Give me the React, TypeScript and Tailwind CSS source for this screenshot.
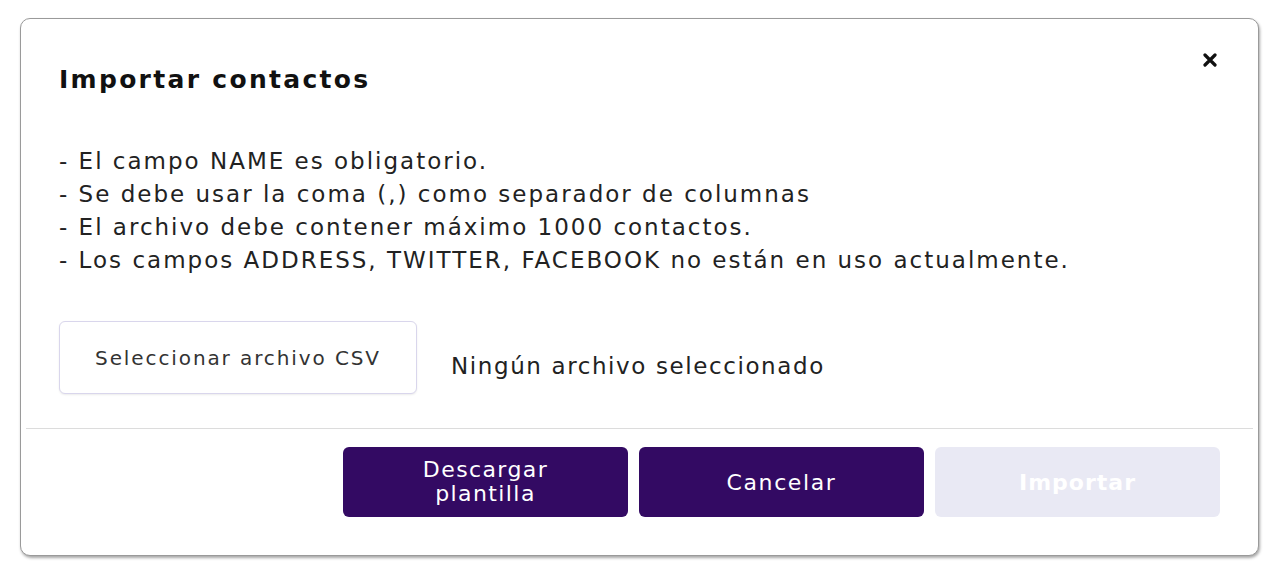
import React from 'react'

const rules = [
    '- El campo NAME es obligatorio.',
    '- Se debe usar la coma (,) como separador de columnas',
    '- El archivo debe contener máximo 1000 contactos.',
    '- Los campos ADDRESS, TWITTER, FACEBOOK no están en uso actualmente.',
]

export default function App() {
    return (
        <div className="w-[1286px] h-[574px] bg-white pt-[18px] pl-[20px] font-['DejaVu_Sans',sans-serif]">
            <div className="w-[1239px] h-[538px] bg-white border border-[#9a9a9a] rounded-[10px] shadow-[1px_2px_3px_rgba(0,0,0,0.35)] flex flex-col">
                {/* header */}
                <div className="h-[110px] flex justify-between pl-[38px] pr-[36px]">
                    <h2 className="pt-[46px] text-[25px] font-bold tracking-[2.3px] text-[#111] leading-[30px]">Importar contactos</h2>
                    <button className="mt-[29px] h-[24px] w-[24px] flex items-center justify-center">
                        <svg width="14" height="14" viewBox="0 0 14 14">
                            <path d="M2 2 L12 12 M12 2 L2 12" stroke="#111" strokeWidth="3.2" strokeLinecap="round"/>
                        </svg>
                    </button>
                </div>

                {/* instructions */}
                <div className="pl-[38px] pt-[16px] text-[23px] tracking-[2px] leading-[33px] text-[#222]">
                    {rules.map((r) => (
                        <div key={r}>{r}</div>
                    ))}
                </div>

                <div className="pl-[38px] mt-[44px] flex items-center">
                    <button className="w-[358px] h-[73px] border border-[#d9d6ec] rounded-[6px] bg-white text-[20px] tracking-[1.9px] text-[#333] shadow-[0_1px_2px_rgba(0,0,0,0.08)]">
                        Seleccionar archivo CSV
                    </button>
                    <span className="ml-[34px] mt-[18px] text-[23px] tracking-[1.6px] text-[#222]">Ningún archivo seleccionado</span>
                </div>

                <div className="mx-[5px] mt-[34px] border-t border-[#dcdcdc]"></div>

                {/* footer */}
                <div className="flex justify-end gap-[11px] pr-[38px] pt-[18px]">
                    <button className="w-[285px] h-[70px] rounded-[6px] bg-[#330a63] text-white text-[22px] tracking-[1.4px] leading-[24px] px-4">
                        Descargar<br />plantilla
                    </button>
                    <button className="w-[285px] h-[70px] rounded-[6px] bg-[#330a63] text-white text-[22px] tracking-[1.6px]">
                        Cancelar
                    </button>
                    <button disabled={true} className="w-[285px] h-[70px] rounded-[6px] bg-[#e9e9f4] text-white text-[22px] tracking-[1px] font-bold">
                        Importar
                    </button>
                </div>
            </div>
        </div>
    )
}
